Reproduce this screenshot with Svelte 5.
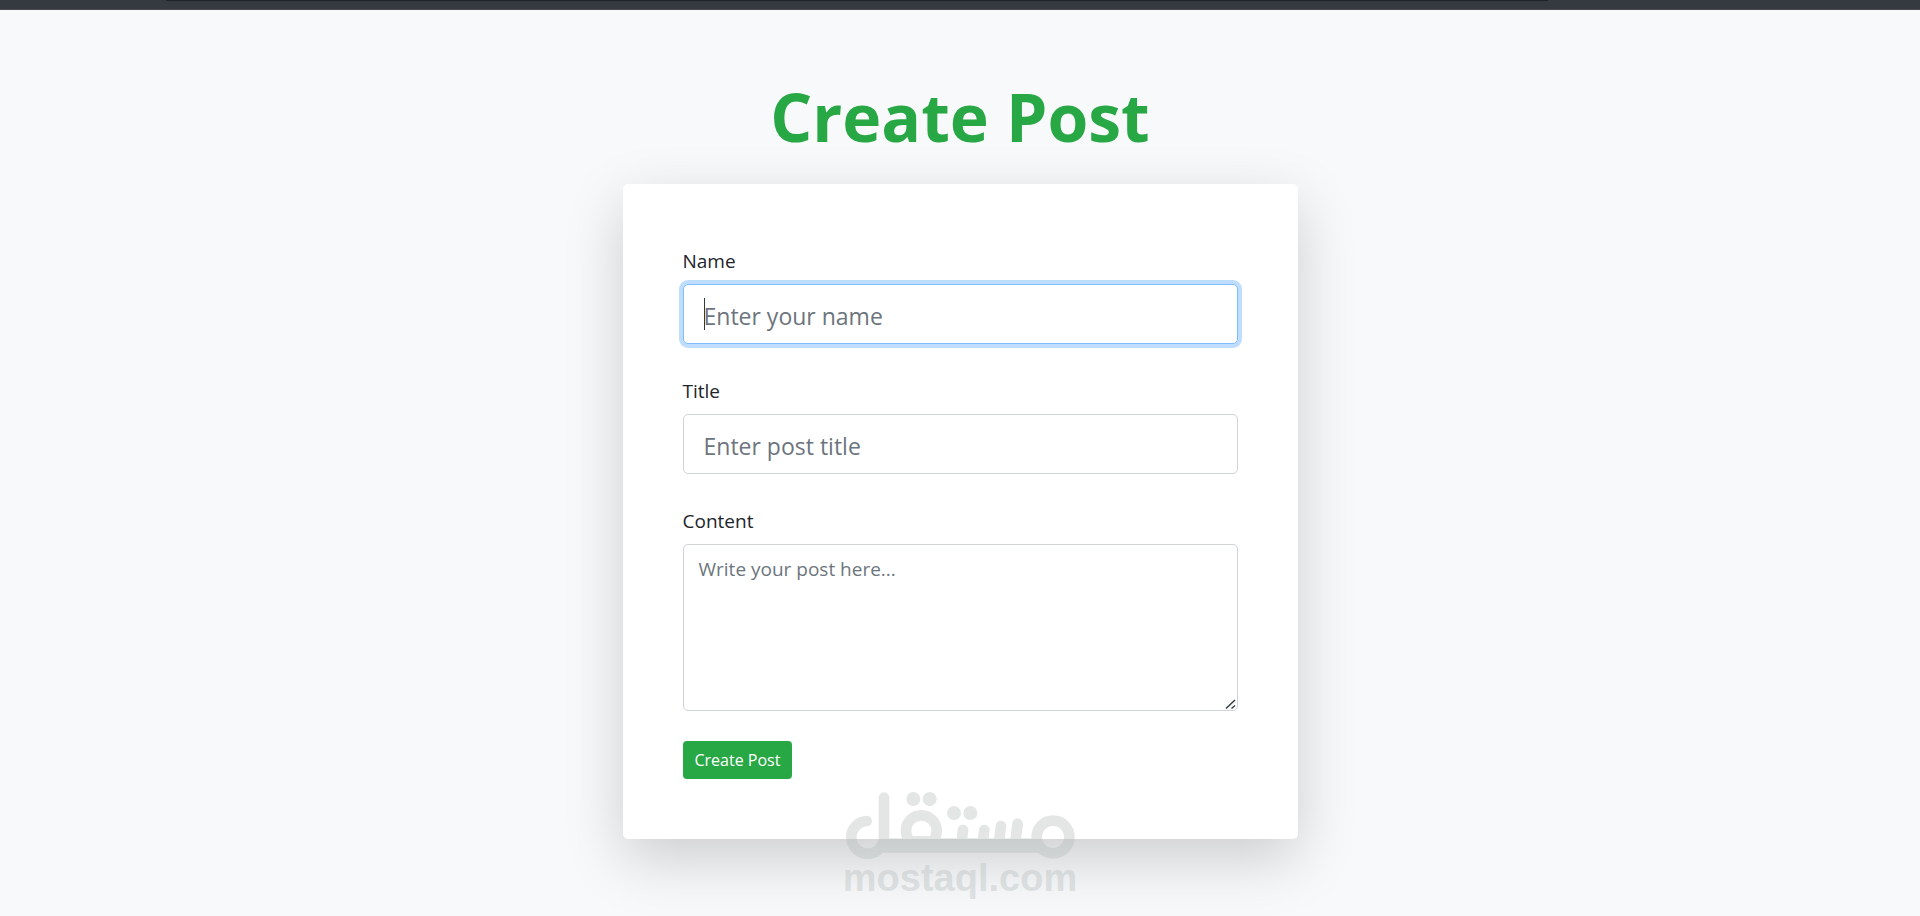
<script>
  let name = $state('');
  let title = $state('');
  let content = $state('');
</script>

<header class="topbar"><div class="topbar-line"></div></header>

<main>
  <h1>Create Post</h1>
  <form class="card" onsubmit={(e) => e.preventDefault()}>
    <div class="group">
      <label for="name">Name</label>
      <div class="field">
        <input id="name" class="active" type="text" placeholder="Enter your name" bind:value={name} />
        <span class="caret"></span>
      </div>
    </div>
    <div class="group">
      <label for="title">Title</label>
      <input id="title" type="text" placeholder="Enter post title" bind:value={title} />
    </div>
    <div class="group">
      <label for="content">Content</label>
      <textarea id="content" rows="5" placeholder="Write your post here..." bind:value={content}></textarea>
    </div>
    <button type="submit">Create Post</button>
  </form>

  <div class="watermark">
    <svg viewBox="0 0 690 204" aria-hidden="true">
      <g fill="none" stroke="currentColor" stroke-width="32" stroke-linecap="round">
        <path d="M65 87A49 49 0 1 0 117 135V17" />
        <circle cx="229" cy="116" r="46" />
        <circle cx="624" cy="135" r="49" />
        <path d="M354 114L350 150M418 114L413 150M468 102L462 150M518 95L511 150" />
      </g>
      <g fill="currentColor">
        <path d="M108 139H190V132H268V139H576Q578 160 592 176L596 182H96Q108 166 108 139Z" />
        <circle cx="205" cy="21" r="21" />
        <circle cx="254" cy="21" r="21" />
        <circle cx="327" cy="63" r="21" />
        <circle cx="376" cy="63" r="21" />
      </g>
    </svg>
    <span>mostaql.com</span>
  </div>
</main>

<style>
  :global(body) {
    background: #f8f9fb;
    color: #212529;
    font-family: "Open Sans", "Noto Sans", sans-serif;
  }
  .topbar {
    height: 10px;
    box-sizing: border-box;
    background: #343a3f;
    border-bottom: 1px solid #454b4f;
  }
  .topbar-line {
    width: 72%;
    height: 1px;
    margin-left: 166px;
    background: #1d2429;
  }
  main {
    position: relative;
    display: flex;
    flex-direction: column;
    align-items: center;
    padding: 64px 20px 76px;
  }
  h1 {
    margin: 0 0 26px;
    color: #28a745;
    font-size: 66px;
    font-weight: 700;
    line-height: 84px;
  }
  .card {
    box-sizing: border-box;
    width: 100%;
    max-width: 675px;
    padding: 60px;
    background: #fff;
    border-radius: 5px;
    box-shadow: 0 20px 60px rgba(0, 0, 0, 0.175);
  }
  .group {
    display: flex;
    flex-direction: column;
    gap: 8px;
    margin-bottom: 30px;
  }
  label {
    padding-top: 2px;
    font-size: 19px;
    line-height: 30px;
  }
  .field {
    position: relative;
  }
  input,
  textarea {
    display: block;
    box-sizing: border-box;
    width: 100%;
    margin: 0;
    color: #495057;
    background: #fff;
    border: 1px solid #ced4da;
    border-radius: 5px;
    font-family: inherit;
    outline: none;
  }
  input {
    height: 60px;
    padding: 12px 20px 8px;
    font-size: 23px;
  }
  textarea {
    height: 167px;
    padding: 9px 15px;
    font-size: 19px;
    line-height: 30px;
    resize: vertical;
  }
  textarea::-webkit-resizer {
    background: url("data:image/svg+xml,%3Csvg xmlns='http://www.w3.org/2000/svg' width='15' height='15'%3E%3Cpath d='M4 13.5L13 5M9.500 13.5L13 10.500' fill='none' stroke='%23333c44' stroke-width='1.500'/%3E%3C/svg%3E") no-repeat right bottom;
  }
  ::placeholder {
    color: #6c757d;
    opacity: 1;
  }
  input.active,
  input:focus,
  textarea:focus {
    border-color: #80bdff;
    box-shadow: 0 0 0 4px rgba(0, 123, 255, 0.25);
  }
  .caret {
    position: absolute;
    top: 14px;
    left: 21px;
    width: 1px;
    height: 32px;
    background: #343a40;
  }
  button {
    display: block;
    height: 38px;
    padding: 0 12px;
    color: #fff;
    background: #28a745;
    border: 0;
    border-radius: 4px;
    font-family: inherit;
    font-size: 16px;
  }
  .watermark {
    position: absolute;
    left: 50%;
    bottom: 18px;
    display: flex;
    flex-direction: column;
    width: 230px;
    transform: translateX(-50%);
    color: #b4bcba;
    opacity: 0.36;
    pointer-events: none;
  }
  .watermark svg {
    display: block;
    width: 100%;
  }
  .watermark span {
    align-self: center;
    font-family: "Liberation Sans", Arial, sans-serif;
    font-size: 38px;
    font-weight: 700;
    line-height: 37px;
  }
</style>
